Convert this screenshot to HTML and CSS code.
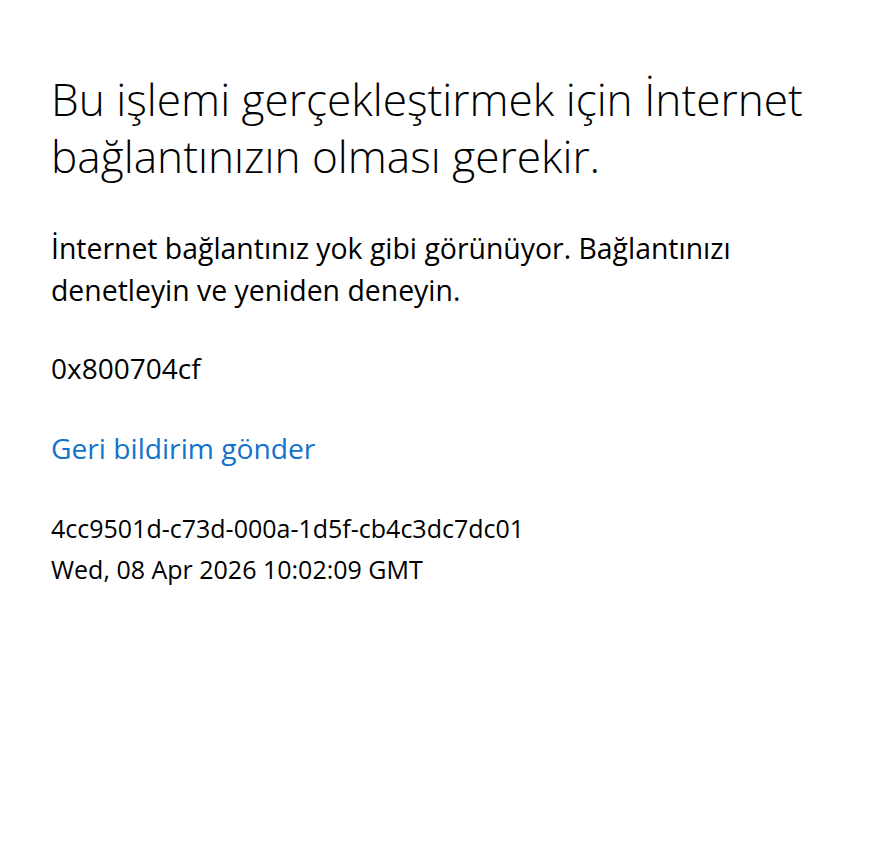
FILE: index.html
```html
<!DOCTYPE html>
<html lang="tr">
<head>
    <meta charset="UTF-8">
    <meta name="viewport" content="width=device-width, initial-scale=1.0">
    <title>Hata</title>
    <link rel="stylesheet" href="styles.css">
</head>
<body>
    <div class="error-page">
        <h1 class="title">Bu işlemi gerçekleştirmek için İnternet bağlantınızın olması gerekir.</h1>
        <p class="message">İnternet bağlantınız yok gibi görünüyor. Bağlantınızı denetleyin ve yeniden deneyin.</p>
        <p class="code">0x800704cf</p>
        <a class="feedback" href="#">Geri bildirim gönder</a>
        <div class="details">
            <div>4cc9501d-c73d-000a-1d5f-cb4c3dc7dc01</div>
            <div>Wed, 08 Apr 2026 10:02:09 GMT</div>
        </div>
    </div>
</body>
</html>
```

FILE: styles.css
```css
body {
    margin: 0;
    padding: 0;
    background-color: #ffffff;
    color: #000000;
    font-family: 'Open Sans', 'Noto Sans', sans-serif;
}

.error-page {
    padding: 71px 40px 0 51px;
    max-width: 780px;
}

.title {
    margin: 0;
    font-size: 44.2px;
    font-weight: 300;
    line-height: 57px;
}

.message {
    margin: 42px 0 0 0;
    font-size: 28.4px;
    line-height: 42px;
    max-width: 720px;
}

.code {
    margin: 36px 0 0 0;
    font-size: 28px;
    line-height: 42px;
}

.feedback {
    display: block;
    margin-top: 38px;
    font-size: 28.2px;
    line-height: 42px;
    color: #1272cc;
    text-decoration: none;
}

.details {
    margin-top: 39px;
    font-size: 25px;
    line-height: 41px;
}
```
